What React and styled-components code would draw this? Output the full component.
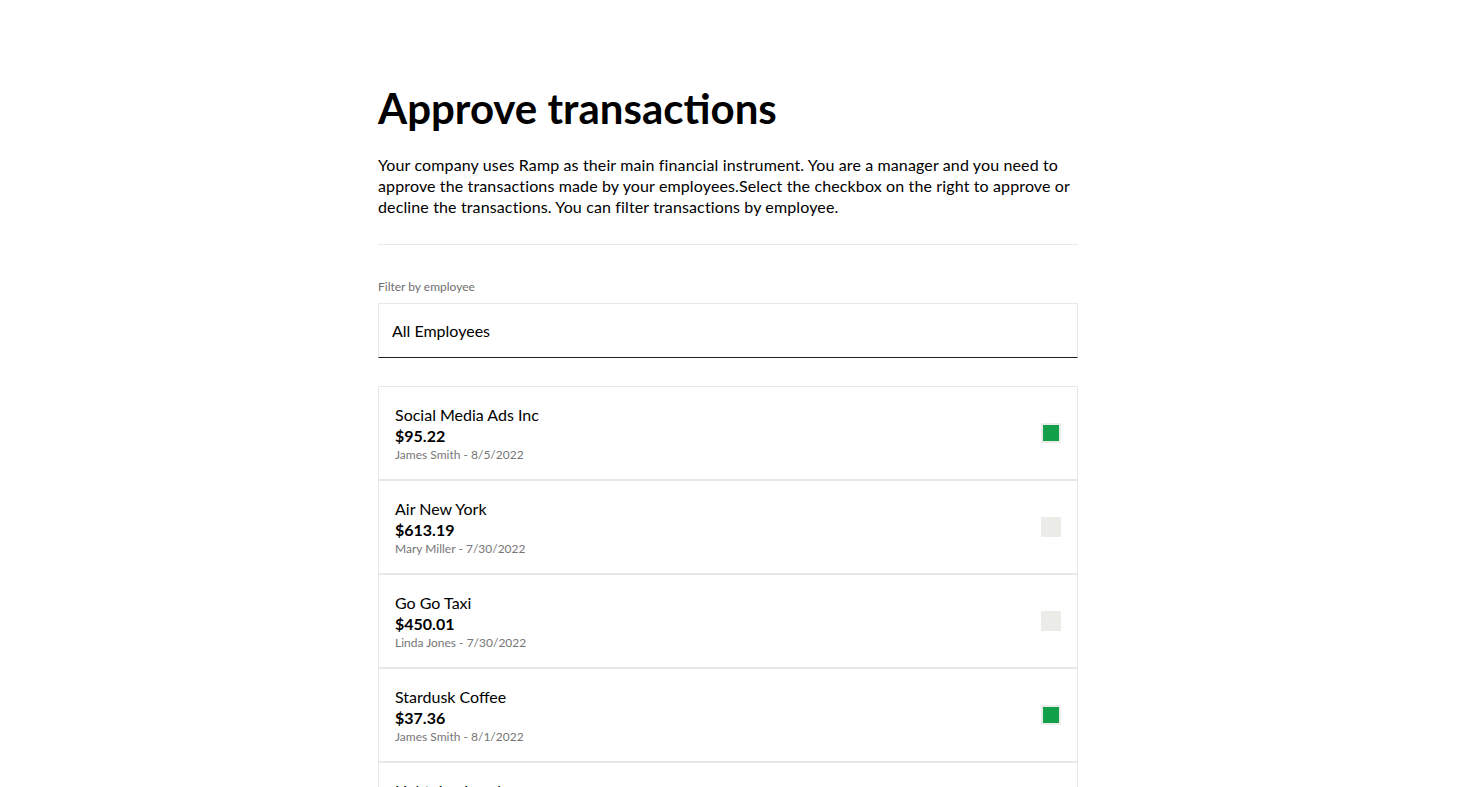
import React, { useState } from 'react';
import styled, { createGlobalStyle } from 'styled-components';

const GlobalStyle = createGlobalStyle`
  html, body {
    margin: 0;
    padding: 0;
    background: #fff;
  }
  body {
    font-family: Lato, "Open Sans", sans-serif;
    color: #000;
  }
`;

const Page = styled.div`
  padding-right: 7px;
`;

const Main = styled.main`
  max-width: 700px;
  margin: 0 auto;
  padding: 82px 0 40px;
`;

const Title = styled.h1`
  margin: 0;
  font-size: 42px;
  font-weight: 700;
  line-height: 52px;
`;

const Intro = styled.p`
  margin: 20px 0 0;
  font-size: 16px;
  line-height: 21px;
  letter-spacing: 0.13px;
`;

const Divider = styled.hr`
  margin: 27px 0 0;
  border: none;
  border-top: 1px solid #e8e8e8;
`;

const FilterLabel = styled.label`
  display: block;
  margin-top: 34px;
  font-size: 12px;
  line-height: 16px;
  color: #707070;
`;

const Select = styled.div`
  margin-top: 8px;
  height: 53px;
  display: flex;
  align-items: center;
  padding: 0 13px;
  border: 1px solid #e8e8e8;
  border-bottom: 1px solid #222;
  font-size: 16px;
`;

const List = styled.div`
  margin-top: 28px;
  display: flex;
  flex-direction: column;
`;

const Card = styled.div`
  display: flex;
  align-items: center;
  justify-content: space-between;
  height: 92px;
  padding: 0 16px;
  border: 1px solid #e8e8e8;
`;

const Info = styled.div`
  display: flex;
  flex-direction: column;
`;

const Merchant = styled.div`
  font-size: 16px;
  line-height: 21px;
`;

const Amount = styled.div`
  font-size: 16px;
  font-weight: 700;
  line-height: 21px;
`;

const Meta = styled.div`
  font-size: 12px;
  line-height: 17px;
  color: #767676;
`;

const Check = styled.button`
  width: 20px;
  height: 20px;
  padding: 0;
  margin: 0;
  border: 2px solid #ebebe7;
  background: ${({ checked }) => (checked ? '#13a04a' : '#ebebe7')};
  cursor: pointer;
`;

const transactions = [
  { id: 1, merchant: 'Social Media Ads Inc', amount: '$95.22', employee: 'James Smith', date: '8/5/2022', approved: true },
  { id: 2, merchant: 'Air New York', amount: '$613.19', employee: 'Mary Miller', date: '7/30/2022', approved: false },
  { id: 3, merchant: 'Go Go Taxi', amount: '$450.01', employee: 'Linda Jones', date: '7/30/2022', approved: false },
  { id: 4, merchant: 'Stardusk Coffee', amount: '$37.36', employee: 'James Smith', date: '8/1/2022', approved: true },
  { id: 5, merchant: 'Lightning Lunch', amount: '$24.50', employee: 'Mary Miller', date: '7/28/2022', approved: false },
];

const App = () => {
  const [approved, setApproved] = useState(
    Object.fromEntries(transactions.map((t) => [t.id, t.approved]))
  );

  const toggle = (id) => setApproved((prev) => ({ ...prev, [id]: !prev[id] }));

  return (
    <Page>
      <GlobalStyle />
      <Main>
        <Title>Approve transactions</Title>
        <Intro>
          Your company uses Ramp as their main financial instrument. You are a manager and you need to
          approve the transactions made by your employees.Select the checkbox on the right to approve or
          decline the transactions. You can filter transactions by employee.
        </Intro>
        <Divider />
        <FilterLabel>Filter by employee</FilterLabel>
        <Select>All Employees</Select>
        <List>
          {transactions.map((t) => (
            <Card key={t.id}>
              <Info>
                <Merchant>{t.merchant}</Merchant>
                <Amount>{t.amount}</Amount>
                <Meta>{t.employee} - {t.date}</Meta>
              </Info>
              <Check checked={approved[t.id]} onClick={() => toggle(t.id)} aria-label="approve" />
            </Card>
          ))}
        </List>
      </Main>
    </Page>
  );
};

export default App;
